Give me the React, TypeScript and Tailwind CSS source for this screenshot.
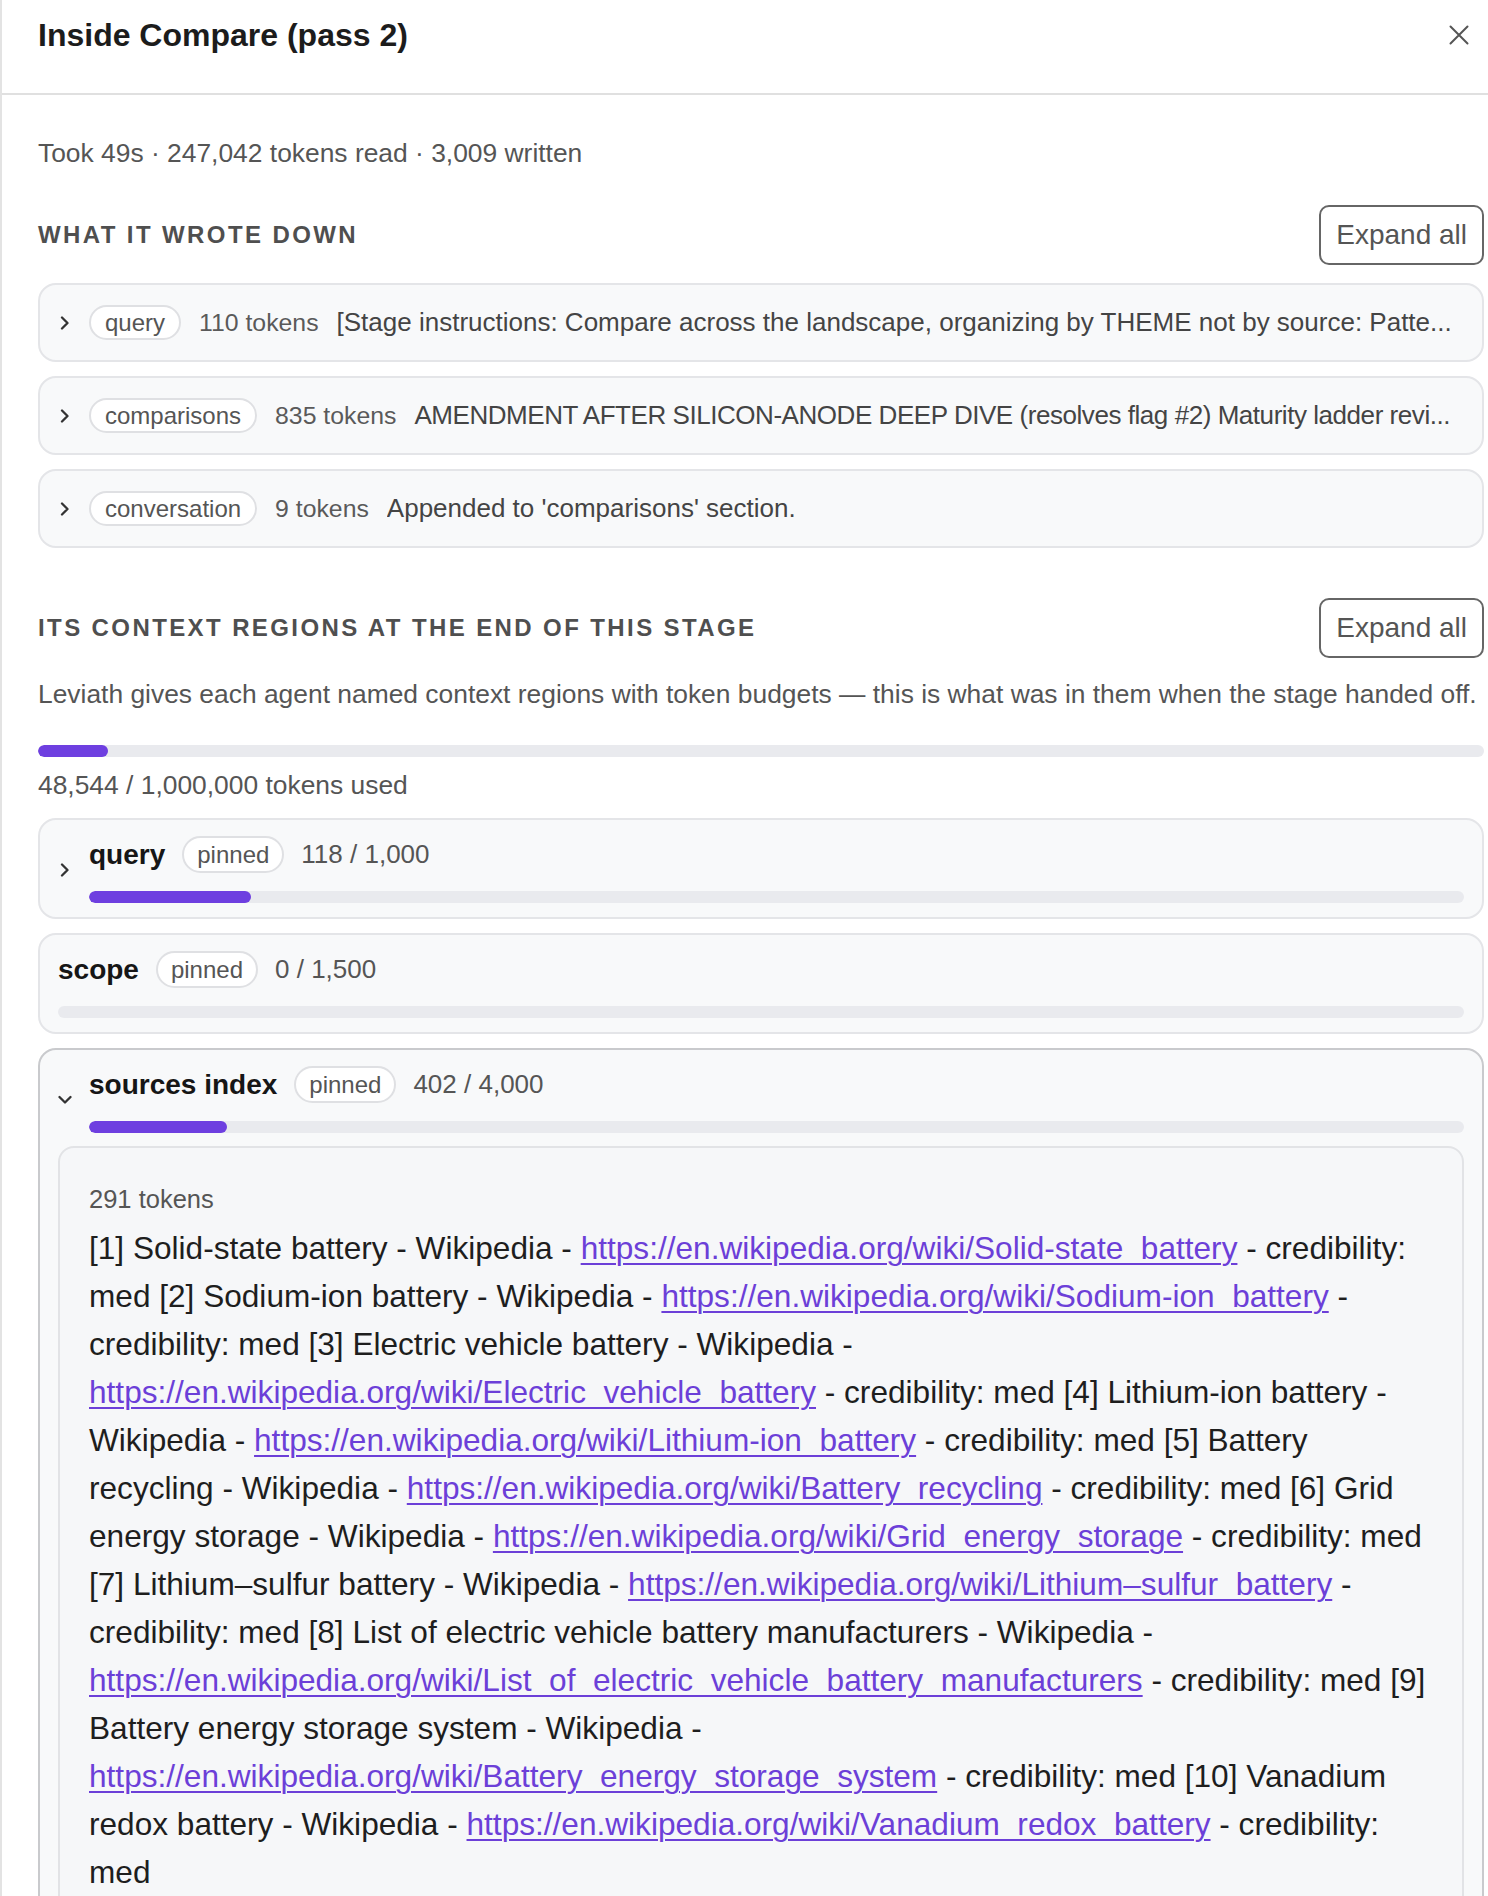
import React from "react";

const FONT = "font-['Liberation_Sans',Arial,Helvetica,sans-serif]";

function ChevronRight() {
  return (
    <svg width="10" height="14" viewBox="0 0 10 14" fill="none">
      <polyline points="2,1.5 7.5,7 2,12.5" stroke="#333" strokeWidth="2.3" strokeLinecap="round" strokeLinejoin="round" />
    </svg>
  );
}

function ChevronDown() {
  return (
    <svg width="14" height="10" viewBox="0 0 14 10" fill="none">
      <polyline points="1.5,2 7,7.5 12.5,2" stroke="#333" strokeWidth="2.3" strokeLinecap="round" strokeLinejoin="round" />
    </svg>
  );
}

function SectionHeader({ title }: { title: string }) {
  return (
    <div className="flex items-center justify-between">
      <div className="text-[24px] font-bold tracking-[0.1em] text-[#4f4f4f] uppercase leading-none">{title}</div>
      <button className="h-[60px] px-[15px] border-2 border-[#666] rounded-[10px] text-[28px] text-[#555] leading-none bg-white">
        Expand all
      </button>
    </div>
  );
}

const notes = [
  {
    tag: "query",
    tokens: "110 tokens",
    text: "[Stage instructions: Compare across the landscape, organizing by THEME not by source: Patte...",
    tight: false,
  },
  {
    tag: "comparisons",
    tokens: "835 tokens",
    text: "AMENDMENT AFTER SILICON-ANODE DEEP DIVE (resolves flag #2) Maturity ladder revi...",
    tight: true,
  },
  {
    tag: "conversation",
    tokens: "9 tokens",
    text: "Appended to 'comparisons' section.",
    tight: false,
  },
];

function NoteCard({ tag, tokens, text, tight }: { tag: string; tokens: string; text: string; tight: boolean }) {
  return (
    <div className="h-[79px] border-2 border-[#e4e5e8] rounded-[18px] bg-[#f8f9fa] flex items-center pl-[18px] pr-[18px]">
      <div className="w-[31px] shrink-0 flex items-center pl-[2px]">
        <ChevronRight />
      </div>
      <span className="shrink-0 h-[35px] px-[14px] border-2 border-[#dfe0e3] rounded-full flex items-center text-[24px] text-[#555] bg-white">
        {tag}
      </span>
      <span className="shrink-0 ml-[18px] text-[24.8px] text-[#5a5a5a]">{tokens}</span>
      <span
        className={
          "ml-[18px] flex-1 min-w-0 whitespace-nowrap overflow-hidden text-[26px] text-[#444] " +
          (tight ? "tracking-[-0.45px]" : "")
        }
      >
        {text}
      </span>
    </div>
  );
}

function Bar({ pct }: { pct: number }) {
  return (
    <div className="h-[12px] rounded-full bg-[#e9eaee] overflow-hidden">
      {pct > 0 && <div className="h-full rounded-full bg-[#6e3fe0]" style={{ width: `${pct}%` }} />}
    </div>
  );
}

function RegionTitle({ name, used, budget }: { name: string; used: string; budget: string }) {
  return (
    <div className="h-[37px] flex items-center">
      <span className="text-[28px] font-bold text-[#161616] leading-none">{name}</span>
      <span className="ml-[17px] h-[37px] px-[13px] border-2 border-[#dfe0e3] rounded-full flex items-center text-[24px] text-[#555] bg-white">
        pinned
      </span>
      <span className="ml-[17px] text-[26px] text-[#555]">
        {used} / {budget}
      </span>
    </div>
  );
}

function L({ href }: { href: string }) {
  return (
    <a href={href} className="text-[#6c3fd8] underline decoration-[2px] underline-offset-[4px]">
      {href}
    </a>
  );
}

export default function App() {
  return (
    <div className={FONT + " min-h-[1896px] bg-white border-l-2 border-[#e3e3e3]"}>
      <header className="h-[95px] border-b-2 border-[#e0e0e0] flex items-start justify-between pt-[19px] pl-[36px] pr-[19px]">
        <h1 className="text-[32px] font-bold text-[#1c1c1c] leading-[32px]">Inside Compare (pass 2)</h1>
        <button className="h-[32px] flex items-center" aria-label="Close">
          <svg width="20" height="20" viewBox="0 0 20 20" fill="none">
            <path d="M1.5 1.5 L18.5 18.5 M18.5 1.5 L1.5 18.5" stroke="#555" strokeWidth="2" strokeLinecap="round" />
          </svg>
        </button>
      </header>

      <div className="pl-[36px] pr-[4px] pt-[39px] pb-[60px]">
        <div className="text-[26.4px] leading-[39px] text-[#555]">Took 49s · 247,042 tokens read · 3,009 written</div>

        <div className="mt-[32px]">
          <SectionHeader title="What it wrote down" />
        </div>

        <div className="mt-[18px] flex flex-col gap-[14px]">
          {notes.map((n) => (
            <NoteCard key={n.tag} {...n} />
          ))}
        </div>

        <div className="mt-[50px]">
          <SectionHeader title="Its context regions at the end of this stage" />
        </div>

        <p className="mt-[17px] text-[26.4px] leading-[39px] text-[#555] whitespace-nowrap">
          Leviath gives each agent named context regions with token budgets — this is what was in them when the stage handed off.
        </p>

        <div className="mt-[31px]">
          <Bar pct={(48544 / 1000000) * 100} />
        </div>
        <div className="mt-[9px] text-[26.4px] leading-[39px] text-[#555]">48,544 / 1,000,000 tokens used</div>

        <div className="mt-[13px] flex flex-col gap-[14px]">
          {/* query */}
          <div className="border-2 border-[#e4e5e8] rounded-[18px] bg-[#f8f9fa] pt-[16px] pb-[14px] px-[18px]">
            <div className="flex items-center">
              <div className="w-[31px] shrink-0 flex items-center pl-[2px]">
                <ChevronRight />
              </div>
              <div className="flex-1 min-w-0">
                <RegionTitle name="query" used="118" budget="1,000" />
                <div className="mt-[18px]">
                  <Bar pct={(118 / 1000) * 100} />
                </div>
              </div>
            </div>
          </div>

          {/* scope */}
          <div className="border-2 border-[#e4e5e8] rounded-[18px] bg-[#f8f9fa] pt-[16px] pb-[14px] px-[18px]">
            <RegionTitle name="scope" used="0" budget="1,500" />
            <div className="mt-[18px]">
              <Bar pct={0} />
            </div>
          </div>

          {/* sources index */}
          <div className="border-2 border-[#c9cacd] rounded-[18px] bg-[#f8f9fa] pt-[16px] pb-[24px] px-[18px]">
            <div className="flex items-center">
              <div className="w-[31px] shrink-0 flex items-center">
                <ChevronDown />
              </div>
              <div className="flex-1 min-w-0">
                <RegionTitle name="sources index" used="402" budget="4,000" />
                <div className="mt-[18px]">
                  <Bar pct={(402 / 4000) * 100} />
                </div>
              </div>
            </div>

            <div className="mt-[13px] border-2 border-[#e2e3e6] rounded-[16px] bg-[#f6f7f9] pl-[29px] pr-[24px] pt-[33px] pb-[40px]">
              <div className="text-[25.5px] leading-[36px] text-[#555]">291 tokens</div>
              <p className="mt-[7px] text-[31.6px] leading-[48px] text-[#1e1e1e] whitespace-nowrap">
                [1] Solid-state battery - Wikipedia - <L href="https://en.wikipedia.org/wiki/Solid-state_battery" /> - credibility:
                <br />
                med [2] Sodium-ion battery - Wikipedia - <L href="https://en.wikipedia.org/wiki/Sodium-ion_battery" /> -
                <br />
                credibility: med [3] Electric vehicle battery - Wikipedia -
                <br />
                <L href="https://en.wikipedia.org/wiki/Electric_vehicle_battery" /> - credibility: med [4] Lithium-ion battery -
                <br />
                Wikipedia - <L href="https://en.wikipedia.org/wiki/Lithium-ion_battery" /> - credibility: med [5] Battery
                <br />
                recycling - Wikipedia - <L href="https://en.wikipedia.org/wiki/Battery_recycling" /> - credibility: med [6] Grid
                <br />
                energy storage - Wikipedia - <L href="https://en.wikipedia.org/wiki/Grid_energy_storage" /> - credibility: med
                <br />
                [7] Lithium–sulfur battery - Wikipedia - <L href="https://en.wikipedia.org/wiki/Lithium–sulfur_battery" /> -
                <br />
                credibility: med [8] List of electric vehicle battery manufacturers - Wikipedia -
                <br />
                <L href="https://en.wikipedia.org/wiki/List_of_electric_vehicle_battery_manufacturers" /> - credibility: med [9]
                <br />
                Battery energy storage system - Wikipedia -
                <br />
                <L href="https://en.wikipedia.org/wiki/Battery_energy_storage_system" /> - credibility: med [10] Vanadium
                <br />
                redox battery - Wikipedia - <L href="https://en.wikipedia.org/wiki/Vanadium_redox_battery" /> - credibility:
                <br />
                med
              </p>
            </div>
          </div>
        </div>
      </div>
    </div>
  );
}
